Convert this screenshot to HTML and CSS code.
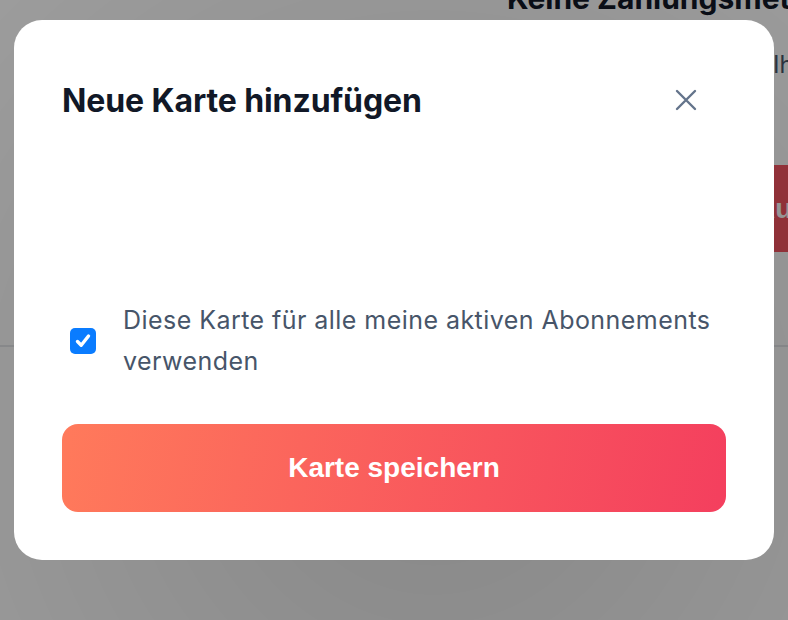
FILE: index.html
```html
<!DOCTYPE html>
<html>
<head>
    <meta charset="utf-8" />
    <title>Zahlungsmethoden</title>
    <link rel="stylesheet" href="styles.css">
</head>
<body>
    <div class="page">
        <h2 class="page-title">Keine Zahlungsmethoden</h2>
        <p class="page-text">Ihre Zahlungsmethoden werden hier angezeigt</p>
        <button class="page-button">Aufladen</button>
        <div class="page-rule"></div>
    </div>

    <div class="overlay">
        <div class="modal">
            <div class="modal-header">
                <h1 class="modal-title">Neue Karte hinzufügen</h1>
                <button class="close" aria-label="Schließen">
                    <svg width="22" height="22" viewBox="0 0 22 22">
                        <path d="M2 2 L20 20 M20 2 L2 20" stroke="#64748b" stroke-width="2.4" stroke-linecap="round" fill="none" />
                    </svg>
                </button>
            </div>

            <div class="card-element"></div>

            <label class="check-row">
                <span class="check">
                    <svg width="18" height="18" viewBox="0 0 18 18">
                        <path d="M3.5 9.5 L7.2 13.2 L14.5 4" stroke="#fff" stroke-width="3.4" stroke-linecap="round" stroke-linejoin="round" fill="none" />
                    </svg>
                </span>
                <span class="check-label">Diese Karte für alle meine aktiven Abonnements verwenden</span>
            </label>

            <button class="save">Karte speichern</button>
        </div>
    </div>
</body>
</html>
```

FILE: styles.css
```css
body {
    margin: 0;
    width: 788px;
    height: 620px;
    overflow: hidden;
    background-color: #ffffff;
    font-family: Inter, "Noto Sans", sans-serif;
}

/* seite im hintergrund */
.page {
    position: relative;
    height: 620px;
}

.page-title {
    margin: -20px 0 0 507px;
    padding-top: 0;
    font-size: 30px;
    font-weight: 700;
    white-space: nowrap;
    color: #111827;
}

.page-text {
    margin: 34px 0 0 773px;
    font-size: 24px;
    white-space: nowrap;
    color: #475569;
}

.page-button {
    display: block;
    margin: 86px 0 0 774px;
    height: 87px;
    width: 300px;
    border: none;
    padding: 0;
    text-align: left;
    font-family: "Liberation Sans", Arial, sans-serif;
    font-size: 28px;
    font-weight: 700;
    color: #ffffff;
    background-color: #f65461;
    text-indent: -19px;
    white-space: nowrap;
}

.page-rule {
    margin-top: 93px;
    border-top: 2px solid #e5e7eb;
}

/* dialog */
.overlay {
    position: fixed;
    top: 0;
    left: 0;
    right: 0;
    bottom: 0;
    display: flex;
    justify-content: center;
    align-items: flex-start;
    padding-top: 20px;
    background: radial-gradient(ellipse at 55% 70%, rgba(0, 0, 0, 0.47), rgba(0, 0, 0, 0.39));
}

.modal {
    width: 760px;
    height: 540px;
    box-sizing: border-box;
    padding: 48px;
    background-color: #ffffff;
    border-radius: 28px;
    display: flex;
    flex-direction: column;
}

.modal-header {
    display: flex;
    align-items: center;
    justify-content: space-between;
    height: 64px;
}

.modal-title {
    margin: 0;
    font-size: 32px;
    font-weight: 700;
    letter-spacing: -0.1px;
    color: #111827;
}

.close {
    width: 40px;
    height: 40px;
    margin-right: 20px;
    padding: 0;
    border: none;
    background: none;
    display: flex;
    align-items: center;
    justify-content: center;
}

.card-element {
    height: 168px;
}

.check-row {
    display: flex;
    align-items: center;
    gap: 27px;
    padding-left: 8px;
}

.check {
    flex: none;
    width: 26px;
    height: 26px;
    border-radius: 5px;
    background-color: #0a7cff;
    display: flex;
    align-items: center;
    justify-content: center;
}

.check-label {
    font-size: 25px;
    letter-spacing: 0.45px;
    line-height: 41px;
    color: #475569;
}

.save {
    margin-top: 42px;
    height: 88px;
    border: none;
    border-radius: 16px;
    background: linear-gradient(100deg, #ff7a5b, #f43f5e);
    color: #ffffff;
    font-family: "Liberation Sans", Arial, sans-serif;
    font-size: 28px;
    font-weight: 700;
}
```
